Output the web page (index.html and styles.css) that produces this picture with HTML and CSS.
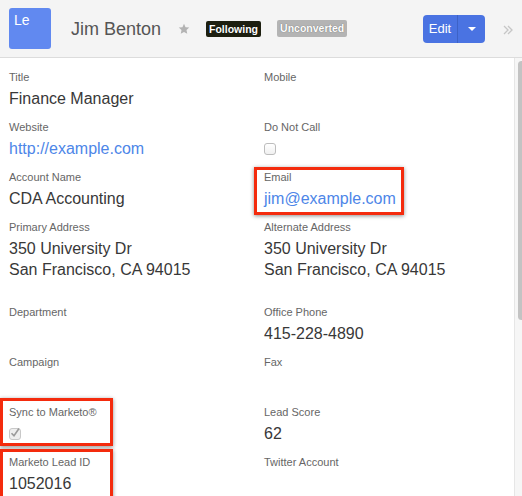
FILE: index.html
```html
<!DOCTYPE html>
<html>
<head>
<meta charset="utf-8">
<link rel="stylesheet" href="styles.css">
</head>
<body>
<div class="header">
  <div class="avatar">Le</div>
  <h1 class="name">Jim Benton</h1>
  <svg class="star" viewBox="0 0 24 24"><polygon points="12,1.5 15.1,8.3 22.5,9.1 17,14.1 18.5,21.5 12,17.8 5.5,21.5 7,14.1 1.5,9.1 8.9,8.3" fill="#b3b3b3"/></svg>
  <span class="badge badge-following">Following</span>
  <span class="badge badge-unconverted">Unconverted</span>
  <div class="btn-group">
    <span class="btn-edit">Edit</span>
    <span class="btn-caret"><svg viewBox="0 0 8 4" width="8" height="4"><polygon points="0,0 8,0 4,4" fill="#fff"/></svg></span>
  </div>
  <svg class="chevrons" viewBox="0 0 10 10" width="10" height="10"><path d="M1 1 L5 5 L1 9 M5 1 L9 5 L5 9" fill="none" stroke="#c6c6c6" stroke-width="1.3"/></svg>
</div>
<div class="main">
  <div class="record">
    <div class="field"><div class="label">Title</div><div class="value">Finance Manager</div></div>
    <div class="field"><div class="label">Mobile</div><div class="value"></div></div>

    <div class="field"><div class="label">Website</div><div class="value link">http://example.com</div></div>
    <div class="field"><div class="label">Do Not Call</div><div class="value"><span class="checkbox"></span></div></div>

    <div class="field"><div class="label">Account Name</div><div class="value">CDA Accounting</div></div>
    <div class="field"><span class="annot annot-email"></span><div class="label">Email</div><div class="value link">jim@example.com</div></div>

    <div class="field address"><div class="label">Primary Address</div><div class="value">350 University Dr<br>San Francisco, CA 94015</div></div>
    <div class="field address"><div class="label">Alternate Address</div><div class="value">350 University Dr<br>San Francisco, CA 94015</div></div>

    <div class="field"><div class="label">Department</div><div class="value"></div></div>
    <div class="field"><div class="label">Office Phone</div><div class="value">415-228-4890</div></div>

    <div class="field"><div class="label">Campaign</div><div class="value"></div></div>
    <div class="field"><div class="label">Fax</div><div class="value"></div></div>

    <div class="field"><span class="annot annot-sync"></span><div class="label">Sync to Marketo®</div><div class="value"><span class="checkbox checked"><svg viewBox="0 0 12 12" width="12" height="12"><path d="M2.5 6.2 L5 8.8 L10 1.5" fill="none" stroke="#9a9a9a" stroke-width="1.6"/></svg></span></div></div>
    <div class="field"><div class="label">Lead Score</div><div class="value">62</div></div>

    <div class="field"><span class="annot annot-lead"></span><div class="label">Marketo Lead ID</div><div class="value">1052016</div></div>
    <div class="field"><div class="label">Twitter Account</div><div class="value"></div></div>
  </div>
  <div class="scrollbar"><div class="thumb"></div></div>
</div>
</body>
</html>
```
FILE: styles.css
```css
html, body {
  margin: 0;
  padding: 0;
}
body {
  width: 522px;
  height: 496px;
  overflow: hidden;
  background: #fff;
  font-family: "Liberation Sans", Arial, Helvetica, sans-serif;
}
.header {
  display: flex;
  align-items: center;
  height: 57px;
  padding: 0 9px;
  background: #f4f4f4;
  border-bottom: 1px solid #dcdcdc;
}
.avatar {
  width: 42px;
  height: 41px;
  box-sizing: border-box;
  padding: 4px 5px;
  background: #6189f0;
  border-radius: 3px;
  color: #fff;
  font-size: 14px;
  line-height: 16px;
  margin-right: 20px;
  flex: none;
}
.name {
  margin: 0 17px 0 0;
  font-size: 18px;
  font-weight: normal;
  color: #555;
  line-height: 22px;
}
.star {
  width: 12px;
  height: 12px;
  margin-right: 16px;
}
.badge {
  display: inline-block;
  font-size: 10.5px;
  font-weight: bold;
  color: #fff;
  line-height: 16px;
  height: 16px;
  padding: 0 3px;
  border-radius: 2px;
  text-shadow: 0 0 1px rgba(0,0,0,0.5);
}
.badge-following {
  background: #1d1f10;
  margin-right: 16px;
}
.badge-unconverted {
  background: #b4b4b4;
  height: 17px;
  line-height: 17px;
}
.btn-group {
  margin-left: auto;
  margin-right: 18px;
  display: flex;
  height: 28px;
  border-radius: 4px;
  background: #4a73e2;
  overflow: hidden;
}
.btn-edit {
  width: 34px;
  color: #fff;
  font-size: 13px;
  line-height: 28px;
  text-align: center;
  border-right: 1px solid #3d62c6;
}
.btn-caret {
  width: 27px;
  display: flex;
  align-items: center;
  justify-content: center;
}
.chevrons {
  margin-top: 2px;
}
.main {
  display: flex;
}
.record {
  flex: 1;
  display: grid;
  grid-template-columns: 255px 1fr;
  padding: 10px 0 0 9px;
}
.field {
  position: relative;
  margin-bottom: 9px;
}
.field.address {
  margin-bottom: 23px;
}
.label {
  font-size: 11px;
  line-height: 18px;
  color: #666;
}
.value {
  display: flow-root;
  font-size: 16px;
  line-height: 21px;
  margin-top: 2px;
  min-height: 21px;
  color: #383838;
}
.value.link {
  color: #4d86e8;
}
.checkbox {
  display: block;
  width: 12px;
  height: 12px;
  box-sizing: border-box;
  margin-top: 5px;
  border: 1px solid #bdbdbd;
  border-radius: 3px;
  background: linear-gradient(#fff, #f0f0f0);
  position: relative;
}
.checkbox.checked {
  background: #eeeeee;
  border-color: #c8c8c8;
}
.checkbox svg {
  position: absolute;
  left: -1px;
  top: -2px;
}
.annot {
  position: absolute;
  box-sizing: border-box;
  border: 3px solid #f42b0d;
  box-shadow: 0 1px 4px rgba(0,0,0,0.45);
}
.annot-email {
  top: -1px;
  left: -10px;
  width: 150px;
  height: 48px;
}
.annot-sync {
  top: -5px;
  left: -9px;
  width: 113px;
  height: 48px;
}
.annot-lead {
  top: -4px;
  left: -9px;
  width: 113px;
  height: 60px;
}
.scrollbar {
  width: 8px;
  height: 438px;
  flex: none;
  box-sizing: border-box;
  background: #f6f6f6;
  border-left: 1px solid #e6e6e6;
  overflow: hidden;
}
.thumb {
  margin: 3px 0 0 3px;
  width: 7px;
  height: 259px;
  border-radius: 4px;
  background: #c3c3c3;
}
```
